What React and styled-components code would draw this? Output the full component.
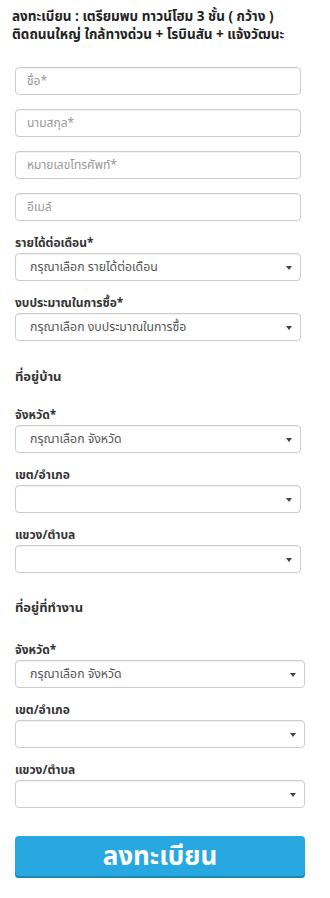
import React from 'react';
import styled, {createGlobalStyle} from 'styled-components';

const GlobalStyle = createGlobalStyle`
  html, body {
    margin: 0;
    padding: 0;
    background: #fff;
  }
  body {
    font-family: Tahoma, 'Noto Sans Thai', 'Noto Sans', 'DejaVu Sans', sans-serif;
    color: #333;
  }
`;

const blue = '#27a8e0';

const Page = styled.div`
  width: 330px;
  padding: 8px 0 20px;
  box-sizing: border-box;
`;

const Title = styled.h1`
  margin: 0 0 23px 12px;
  font-size: 13.5px;
  line-height: 18px;
  font-weight: bold;
  color: #222;
`;

const Section = styled.div`
  padding: 0 ${p => p.right}px 0 15px;
  display: flex;
  flex-direction: column;
`;

const Field = styled.div`
  display: flex;
  flex-direction: column;
  margin-bottom: 14px;
`;

const Label = styled.label`
  font-size: 12px;
  line-height: 16px;
  font-weight: bold;
  color: #333;
  margin-bottom: 2px;
`;

const Heading = styled.h3`
  margin: ${p => p.top}px 0 ${p => p.bottom}px;
  font-size: 13px;
  line-height: 18px;
  font-weight: bold;
  color: #333;
`;

const Input = styled.input`
  height: 28px;
  box-sizing: border-box;
  border: 1px solid #ccc;
  border-radius: 4px;
  box-shadow: inset 0 1px 1px rgba(0, 0, 0, 0.05);
  padding: 0 11px;
  font: inherit;
  font-size: 12px;
  color: #555;
  outline: none;
  &::placeholder {
    color: #999;
  }
`;

const SelectBox = styled.div`
  position: relative;
  height: 28px;
  box-sizing: border-box;
  border: 1px solid #ccc;
  border-radius: 4px;
  box-shadow: inset 0 1px 1px rgba(0, 0, 0, 0.05);
  display: flex;
  align-items: center;
  padding: 0 20px 0 14px;
  font-size: 12.3px;
  color: #555;
  &:after {
    content: "";
    position: absolute;
    right: 8px;
    top: 12px;
    border-left: 3px solid transparent;
    border-right: 3px solid transparent;
    border-top: 4px solid #444;
  }
`;

const Submit = styled.button`
  margin: 14px 0 0;
  height: 42px;
  border: 0;
  border-radius: 4px;
  background: ${blue};
  box-shadow: inset 0 -2px 0 #1b86b6;
  color: #fff;
  font: inherit;
  font-size: 26px;
  font-weight: bold;
  cursor: pointer;
`;

const TextField = ({placeholder}) => (
  <Field>
    <Input placeholder={placeholder} />
  </Field>
);

const SelectField = ({label, value}) => (
  <Field>
    <Label>{label}</Label>
    <SelectBox>{value}</SelectBox>
  </Field>
);

export default function App() {
  return (
    <Page>
      <GlobalStyle />
      <Title>
        ลงทะเบียน : เตรียมพบ ทาวน์โฮม 3 ชั้น ( กว้าง )<br />
        ติดถนนใหญ่ ใกล้ทางด่วน + โรบินสัน + แจ้งวัฒนะ
      </Title>
      <Section right={29}>
        <TextField placeholder="ชื่อ*" />
        <TextField placeholder="นามสกุล*" />
        <TextField placeholder="หมายเลขโทรศัพท์*" />
        <TextField placeholder="อีเมล์" />
        <SelectField label="รายได้ต่อเดือน*" value="กรุณาเลือก รายได้ต่อเดือน" />
        <SelectField label="งบประมาณในการซื้อ*" value="กรุณาเลือก งบประมาณในการซื้อ" />
        <Heading top={13} bottom={21}>ที่อยู่บ้าน</Heading>
        <SelectField label="จังหวัด*" value="กรุณาเลือก จังหวัด" />
        <SelectField label="เขต/อำเภอ" value="" />
        <SelectField label="แขวง/ตำบล" value="" />
      </Section>
      <Section right={25}>
        <Heading top={12} bottom={25}>ที่อยู่ที่ทำงาน</Heading>
        <SelectField label="จังหวัด*" value="กรุณาเลือก จังหวัด" />
        <SelectField label="เขต/อำเภอ" value="" />
        <SelectField label="แขวง/ตำบล" value="" />
        <Submit>ลงทะเบียน</Submit>
      </Section>
    </Page>
  );
}
